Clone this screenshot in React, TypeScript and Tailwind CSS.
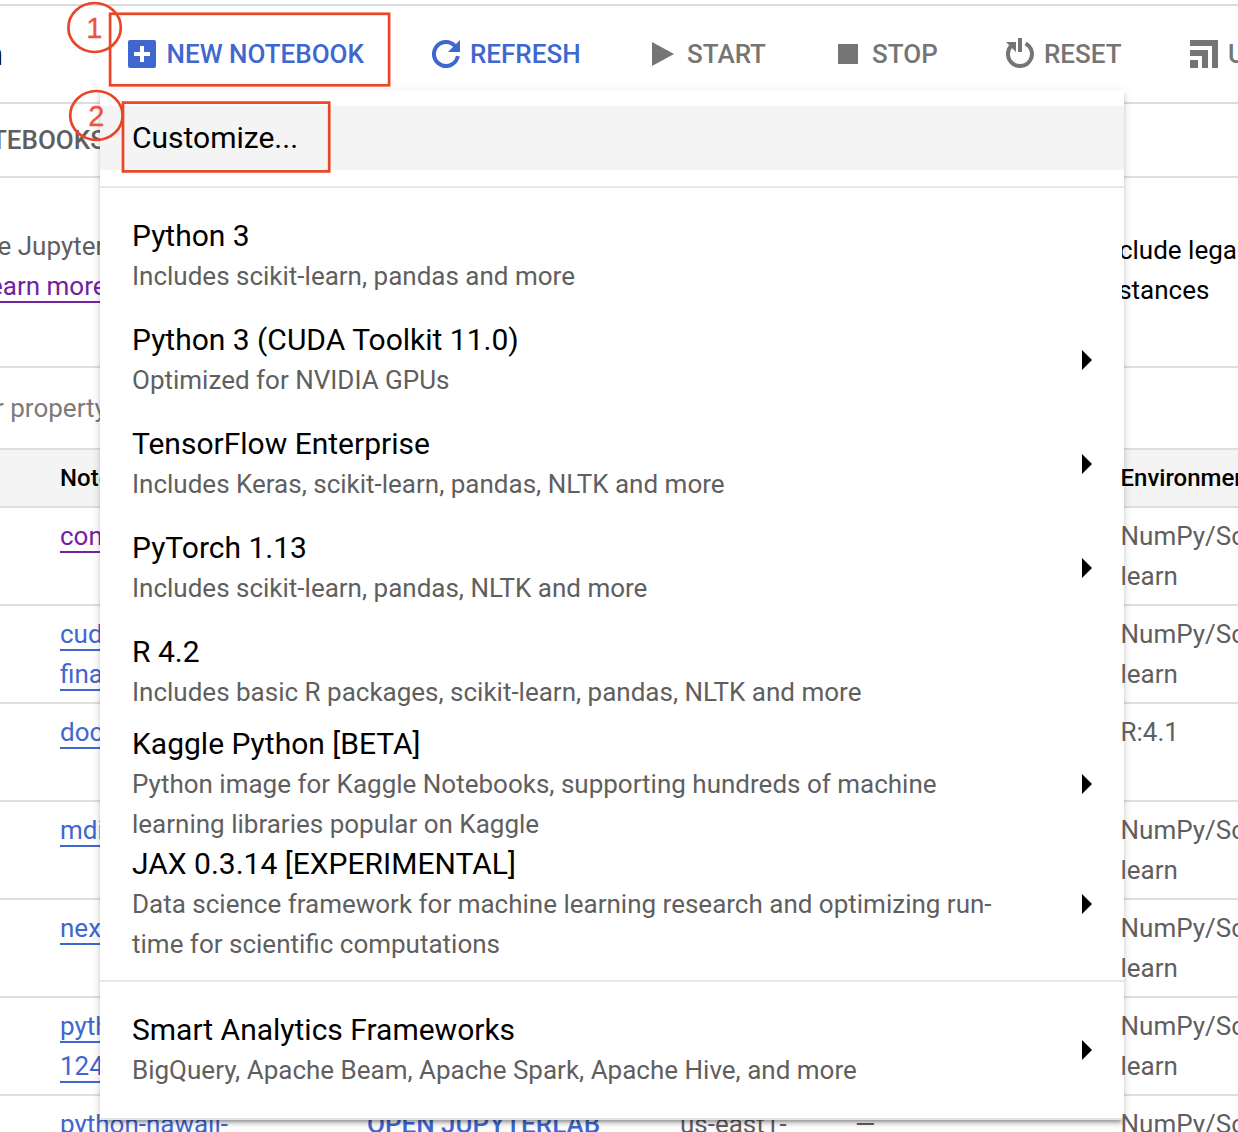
import type { ReactNode } from "react";

function AddBoxIcon() {
  return (
    <svg width="28" height="28" viewBox="0 0 28 28">
      <rect width="28" height="28" rx="2" fill="currentColor" />
      <path d="M14 6v16M6 14h16" stroke="#fff" strokeWidth="4" />
    </svg>
  );
}

function RefreshIcon() {
  return (
    <svg width="28" height="28" viewBox="0 0 28 28">
      <path d="M25.8 16A12 12 0 1 1 22.8 5.9" fill="none" stroke="currentColor" strokeWidth="4" />
      <path d="M28 0v12H16z" fill="currentColor" />
    </svg>
  );
}

function PlayIcon() {
  return (
    <svg width="28" height="28" viewBox="0 0 28 28">
      <path d="M4 2v24l22-12z" fill="currentColor" />
    </svg>
  );
}

function StopIcon() {
  return (
    <svg width="28" height="28" viewBox="0 0 28 28">
      <path d="M4 4h20v20H4z" fill="currentColor" />
    </svg>
  );
}

function ResetIcon() {
  return (
    <svg width="28" height="28" viewBox="0 0 28 28" className="overflow-visible">
      <path d="M19.6 3.4A12 12 0 1 1 5 6" fill="none" stroke="currentColor" strokeWidth="4" />
      <path d="M12-2h4v14h-4zM0 2h10v10z" fill="currentColor" />
    </svg>
  );
}

function UpgradeIcon() {
  return (
    <svg width="28" height="28" viewBox="0 0 28 28">
      <path d="M0 0h28v28h-6V6H0zM0 10h18v18h-6V16H0zM0 20h8v8H0z" fill="currentColor" />
    </svg>
  );
}

const actions: { label: string; icon: ReactNode; tone: string }[] = [
  { label: "NEW NOTEBOOK", icon: <AddBoxIcon />, tone: "w-[304px] gap-[10.5px] text-[#4067d0]" },
  { label: "REFRESH", icon: <RefreshIcon />, tone: "w-[216px] gap-2.5 text-[#4067d0]" },
  { label: "START", icon: <PlayIcon />, tone: "w-[186px] gap-[11px] text-[#757575]" },
  { label: "STOP", icon: <StopIcon />, tone: "w-[172px] gap-2.5 text-[#757575]" },
  { label: "RESET", icon: <ResetIcon />, tone: "w-[184px] gap-2.5 text-[#757575]" },
  { label: "UPGRADE", icon: <UpgradeIcon />, tone: "w-[184px] gap-2.5 text-[#757575]" },
];

const rows: { name: string[]; visited?: boolean; env: string[]; open?: string; zone?: string; gpu?: string }[] = [
  { name: ["con"], visited: true, env: ["NumPy/Scikit-", "learn"] },
  { name: ["cud", "fina"], env: ["NumPy/Scikit-", "learn"] },
  { name: ["doc"], env: ["R:4.1"] },
  { name: ["mdi"], env: ["NumPy/Scikit-", "learn"] },
  { name: ["nex"], env: ["NumPy/Scikit-", "learn"] },
  { name: ["pyth", "124"], env: ["NumPy/Scikit-", "learn"] },
  { name: ["python-hawaii-"], env: ["NumPy/Scikit-", "learn"], open: "OPEN JUPYTERLAB", zone: "us-east1-", gpu: "—" },
];

function MenuItem({ title, lines, tight, arrow }: { title: string; lines: string[]; tight?: boolean; arrow?: boolean }) {
  return (
    <div className={`flex items-center pl-8 pr-8 ${tight ? "" : "py-3"}`}>
      <div className="flex-1 leading-10">
        <div className="text-[30px] text-black">{title}</div>
        {lines.map((line) => (
          <div key={line} className="text-[26px] text-[#5f5f5f]">{line}</div>
        ))}
      </div>
      {arrow && (
        <svg width="10" height="20" viewBox="0 0 10 20">
          <path d="M0 0v20l10-10z" />
        </svg>
      )}
    </div>
  );
}

function Menu() {
  return (
    <div className="absolute left-[100px] top-[90px] z-10 w-[1024px] border-b-2 border-[#e4e4e4] bg-white py-4 shadow-[0_6px_2px_-4px_rgba(0,0,0,0.2),0_4px_4px_rgba(0,0,0,0.14),0_2px_10px_rgba(0,0,0,0.12)]">
      <div className="h-16 bg-[#f4f4f4] pl-8 text-[30px] leading-16 text-black">Customize...</div>
      <div className="my-4 h-0.5 bg-[#e8e8e8]" />
      <MenuItem title="Python 3" lines={["Includes scikit-learn, pandas and more"]} />
      <MenuItem title="Python 3 (CUDA Toolkit 11.0)" lines={["Optimized for NVIDIA GPUs"]} arrow />
      <MenuItem title="TensorFlow Enterprise" lines={["Includes Keras, scikit-learn, pandas, NLTK and more"]} arrow />
      <MenuItem title="PyTorch 1.13" lines={["Includes scikit-learn, pandas, NLTK and more"]} arrow />
      <MenuItem title="R 4.2" lines={["Includes basic R packages, scikit-learn, pandas, NLTK and more"]} />
      <MenuItem
        title="Kaggle Python [BETA]"
        lines={["Python image for Kaggle Notebooks, supporting hundreds of machine", "learning libraries popular on Kaggle"]}
        tight
        arrow
      />
      <MenuItem
        title="JAX 0.3.14 [EXPERIMENTAL]"
        lines={["Data science framework for machine learning research and optimizing run-", "time for scientific computations"]}
        tight
        arrow
      />
      <div className="my-4 h-0.5 bg-[#e8e8e8]" />
      <MenuItem title="Smart Analytics Frameworks" lines={["BigQuery, Apache Beam, Apache Spark, Apache Hive, and more"]} arrow />
    </div>
  );
}

function Annotations() {
  return (
    <svg className="absolute left-[60px] top-0 z-30" width="340" height="180" viewBox="60 0 340 180" fill="none" stroke="#e94526" strokeWidth="2.7">
      <rect x="110.1" y="13.8" width="279" height="71.5" />
      <rect x="123" y="102.6" width="206.2" height="68.8" />
      <ellipse cx="94.6" cy="27.5" rx="26.2" ry="24.5" />
      <ellipse cx="96.4" cy="115.5" rx="26.2" ry="24.5" />
      <g fill="#ee5242" stroke="#ee5242" strokeWidth="0.3" fontFamily="Liberation Sans" fontSize="29" textAnchor="middle">
        <text x="94.3" y="37.5">1</text>
        <text x="96.4" y="125.5">2</text>
      </g>
    </svg>
  );
}

export default function App() {
  return (
    <div className="relative h-[1132px] w-[1238px] overflow-hidden bg-white font-[Roboto,sans-serif] text-[26px] leading-10 whitespace-nowrap text-[#5f5f5f]">
      <div className="pt-1">
        <header className="flex h-[100px] items-center border-y-2 border-[#dcdce0]">
          <div className="w-32 shrink-0 text-[32px] font-medium text-black">
            <span className="-ml-[15px]">n</span>
          </div>
          {actions.map((a) => (
            <div key={a.label} className={`flex shrink-0 items-center font-medium ${a.tone}`}>
              {a.icon}
              {a.label}
            </div>
          ))}
        </header>
      </div>

      <nav className="flex h-[74px] items-center border-b-2 border-[#dedede] font-medium">
        <span className="-ml-[9px]">TEBOOKS</span>
      </nav>

      <section className="flex h-[190px] justify-between border-b-2 border-[#dedede]">
        <div className="pt-12">
          <div className="-ml-[2.5px]">e Jupyter</div>
          <div className="-ml-[11px] text-[#7022a2]">
            <span className="border-b-2 border-[#7022a2]">earn more</span>
          </div>
        </div>
        <div className="relative z-20 w-[116px] overflow-hidden pt-[52px] text-black">
          <div className="-ml-[24.5px]">Include legacy</div>
          <div className="-ml-[24.5px]">instances</div>
        </div>
      </section>

      <div className="flex h-20 items-center text-[#7b7b7b]">
        <span className="-ml-[5px]">r property</span>
      </div>

      <div className="flex h-[60px] items-center justify-between border-y-2 border-[#dedede] bg-[#f4f4f4] pl-[60px] text-[24px] font-medium text-black">
        <span>Note</span>
        <span className="relative z-20 w-[116px] overflow-hidden">
          <span className="-ml-[1.5px]">Environment</span>
        </span>
      </div>

      {rows.map((r) => (
        <div key={r.name[0]} className="flex h-[98px] border-b-2 border-[#dedede] pl-[60px] pt-2">
          <div className={`w-[307px] shrink-0 ${r.visited ? "text-[#7022a2]" : "text-[#4067d0]"}`}>
            {r.name.map((n) => (
              <div key={n}>
                <span className="border-b-2 border-current">{n}</span>
              </div>
            ))}
          </div>
          <div className="w-[313px] shrink-0 font-medium text-[#4067d0]">{r.open}</div>
          <div className="w-[175px] shrink-0">{r.zone}</div>
          <div className="w-[267px] shrink-0">{r.gpu}</div>
          <div className="relative z-20 w-[116px] shrink-0 overflow-hidden">
            {r.env.map((e) => (
              <div key={e} className="-ml-[1.5px]">{e}</div>
            ))}
          </div>
        </div>
      ))}

      <Menu />
      <Annotations />
    </div>
  );
}
